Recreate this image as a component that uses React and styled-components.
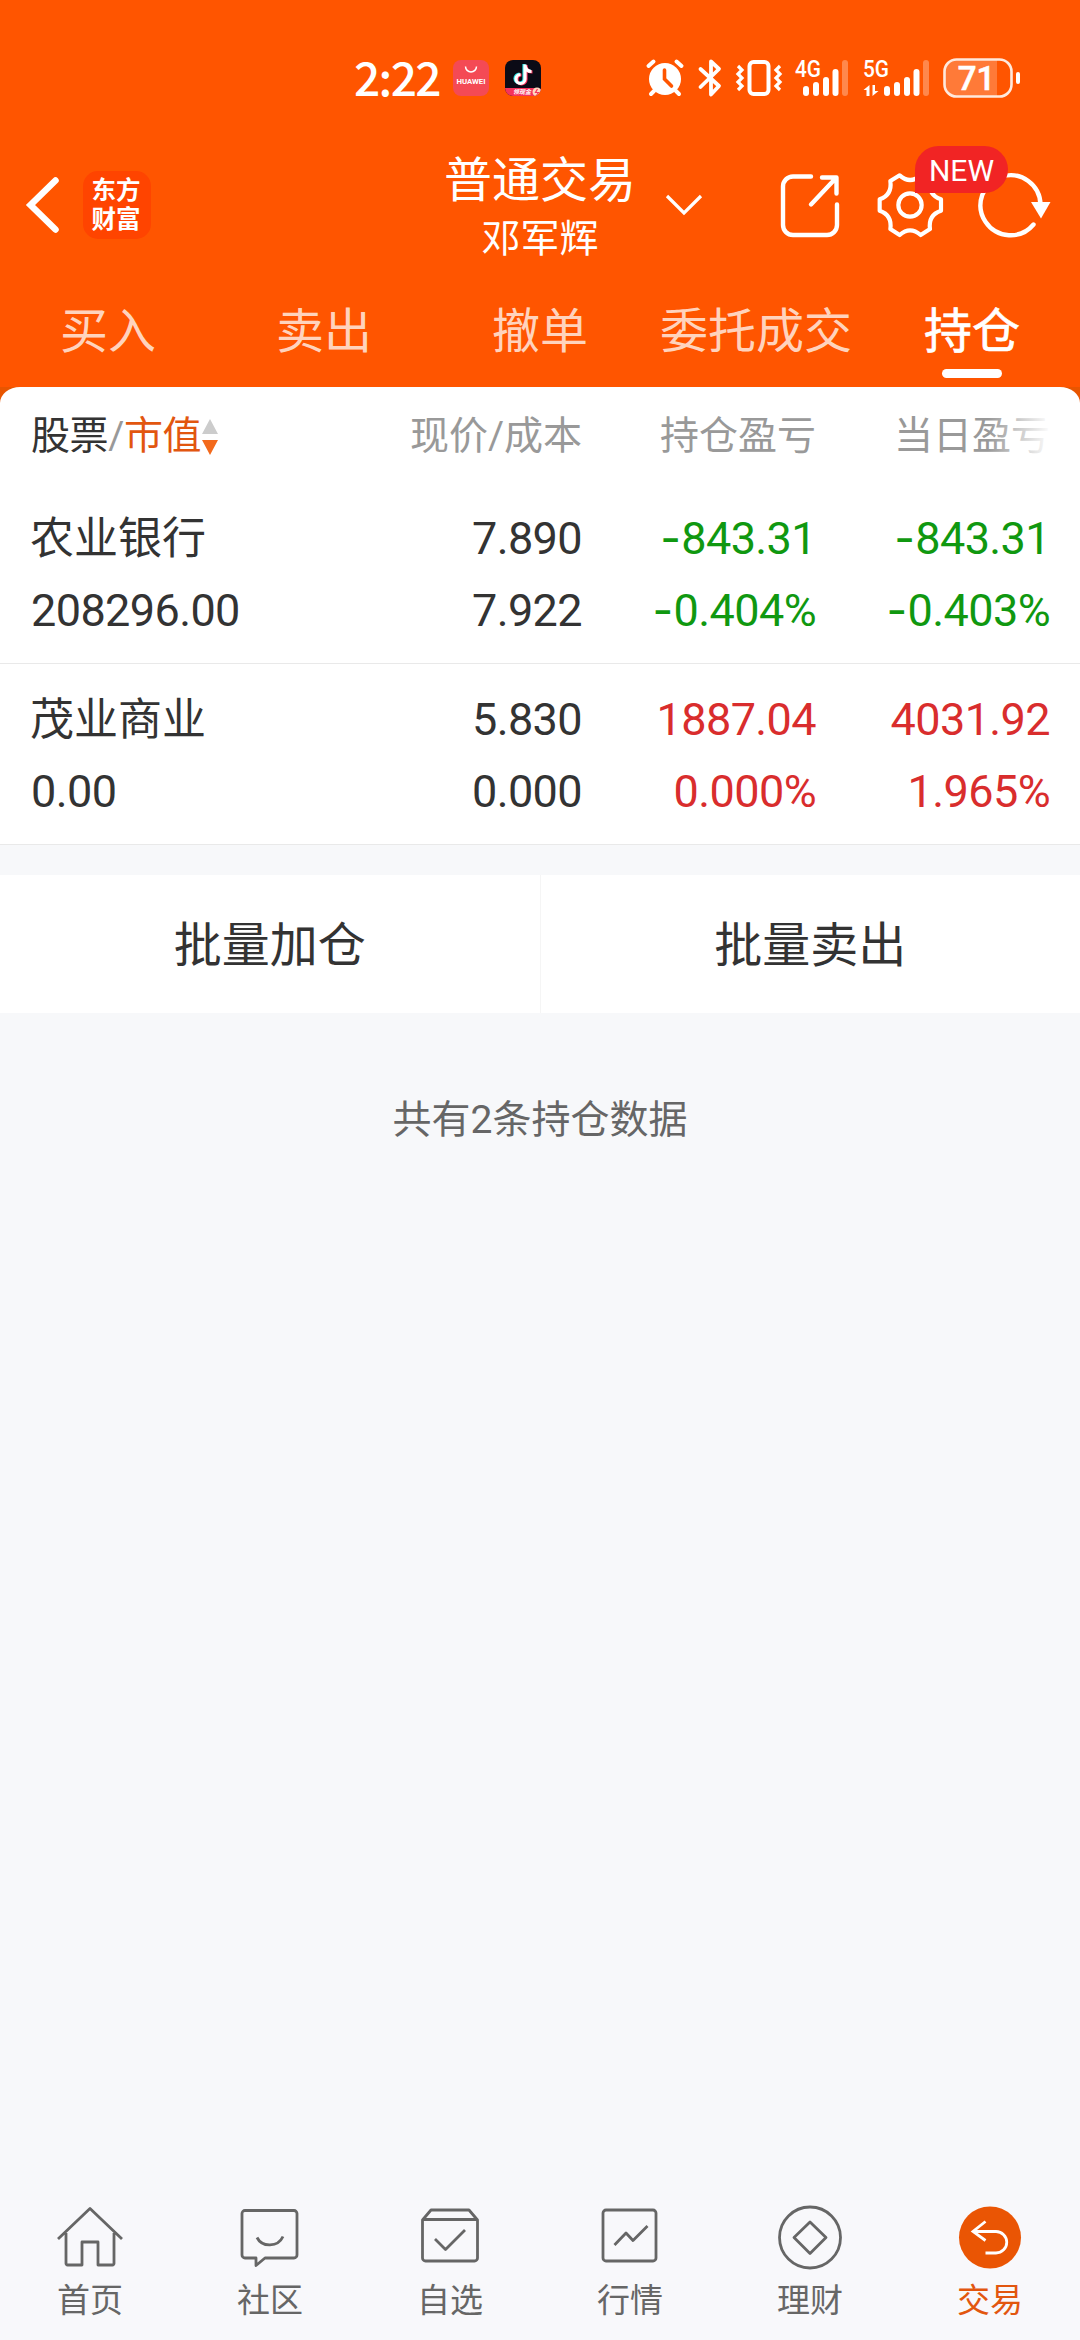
import styled, { createGlobalStyle } from 'styled-components'


const GlobalStyle = createGlobalStyle`
    *{
        box-sizing: border-box;
    }
    body{
        margin: 0;
        background: #f7f8fa;
        font-family: Roboto, "Noto Sans CJK SC", sans-serif;
        color: #333;
    }
    svg{
        display: block;
        flex: none;
        overflow: visible;
    }
`

const Page = styled.main`
    width: 1080px;
    height: 2340px;
    display: flex;
    flex-direction: column;
    overflow: hidden;
`

const HeaderStyle = styled.header`
    height: 387px;
    background: #ff5500;
    color: #fff;
    display: flex;
    flex-direction: column;
`

const StatusBar = styled.div`
    height: 138px;
    padding: 18px 59px 0 354px;
    display: flex;
    align-items: center;
    .time{
        width: 99px;
        margin-top: -5px;
        font-family: "Noto Sans CJK SC", sans-serif;
        font-size: 46px;
        font-weight: 500;
        line-height: 50px;
        letter-spacing: -1.6px;
        white-space: nowrap;
    }
    .apps{
        display: flex;
        gap: 16px;
        margin-right: auto;
    }
    .system{
        display: flex;
        align-items: center;
    }
    .system > * + *{
        margin-left: 13px;
    }
`

const TopBar = styled.div`
    height: 134px;
    display: grid;
    grid-template-columns: 360px 1fr 360px;
`

const Left = styled.div`
    display: flex;
    align-items: center;
    padding-left: 24px;
    gap: 23px;
`

const Logo = styled.div`
    width: 68px;
    height: 68px;
    border-radius: 15px;
    background: #ff4400;
    display: flex;
    flex-direction: column;
    align-items: center;
    justify-content: center;
    font-size: 24.5px;
    font-weight: 700;
    line-height: 29px;
    padding-right: 2px;
`

const Title = styled.div`
    display: flex;
    flex-direction: column;
    align-items: center;
    position: relative;
    h1{
        margin: 15px 0 0;
        font-size: 48px;
        font-weight: 400;
        line-height: 56px;
    }
    p{
        margin: 7px 0 0;
        font-size: 39px;
        line-height: 46px;
    }
    svg{
        position: absolute;
        left: 304px;
        top: 55px;
    }
`

const Actions = styled.div`
    display: flex;
    align-items: center;
    padding-left: 58px;
    position: relative;
    gap: 34px;
`

const Badge = styled.span`
    position: absolute;
    left: 195px;
    top: 8px;
    width: 93px;
    height: 47px;
    border-radius: 24px 24px 24px 0;
    background: #f12424;
    font-size: 30px;
    line-height: 49px;
    text-align: center;
`

const Tabs = styled.nav`
    flex: 1;
    display: grid;
    grid-template-columns: repeat(5, 1fr);
`

const Tab = styled.a`
    display: flex;
    flex-direction: column;
    align-items: center;
    padding-top: 32px;
    font-size: 48px;
    line-height: 56px;
    color: ${({ $active }) => ($active ? '#fff' : '#ffd3bd')};
    -webkit-text-stroke: ${({ $active }) => ($active ? '0.7px' : '0')};
    &::after{
        content: "";
        width: 60px;
        height: 9px;
        margin-top: 9px;
        border-radius: 5px;
        background: ${({ $active }) => ($active ? '#fff' : 'transparent')};
    }
`

const Panel = styled.section`
    background: linear-gradient(#e85500 20px, #fff 20px);
`

const Card = styled.div`
    background: #fff;
    border-radius: 20px 20px 0 0 / 16px 16px 0 0;
`

const Line = styled.div`
    display: grid;
    grid-template-columns: 300px 251px 234px 234px;
    padding-left: 31px;
    text-align: right;
    > :first-child{
        text-align: left;
    }
`

const TableHead = styled(Line)`
    height: 114px;
    padding-top: 21px;
    font-size: 39px;
    line-height: 56px;
    color: #999;
    position: relative;
    &::after{
        content: "";
        position: absolute;
        right: 0;
        top: 20px;
        width: 92px;
        height: 58px;
        background: linear-gradient(90deg, rgba(255, 255, 255, 0), rgba(255, 255, 255, 0.95) 60px);
    }
`

const SortCell = styled.span`
    display: flex;
    align-items: center;
    height: 56px;
    letter-spacing: -0.4px;
    .name{
        color: #333;
    }
    .sorted{
        color: #e2560f;
    }
    svg{
        margin: 2px 0 0 1px;
    }
`

const Holding = styled.article`
    height: ${({ $h }) => $h}px;
    padding-top: ${({ $top }) => $top}px;
    border-bottom: 1px solid #e9e9e9;
`

const Row = styled(Line)`
    font-size: 45px;
    line-height: 72px;
    letter-spacing: -0.6px;
    .stock{
        font-size: 44px;
        margin-left: -1px;
        letter-spacing: 0;
    }
`

const tones = { up: '#d92d2d', down: '#109810', flat: '#333' }

const Value = styled.span`
    color: ${({ $tone }) => tones[$tone]};
    .minus{
        font-family: Inter, sans-serif;
        line-height: 1;
        margin-right: 1px;
    }
`

const BatchBar = styled.div`
    margin-top: 30px;
    height: 138px;
    display: flex;
    background: #fff;
`

const BatchButton = styled.button`
    flex: 1;
    border: 0;
    padding: 0 0 7px;
    background: none;
    font: inherit;
    font-size: 48px;
    color: #333;
    & + &{
        border-left: 1px solid #f5f5f5;
    }
`

const Summary = styled.p`
    margin: 78px 0 0;
    text-align: center;
    font-size: 39px;
    line-height: 58px;
    color: #666;
`

const BottomNav = styled.nav`
    margin-top: auto;
    height: 140px;
    display: grid;
    grid-template-columns: repeat(6, 1fr);
    background: #f8f8fb;
`

const NavItem = styled.a`
    display: flex;
    flex-direction: column;
    align-items: center;
    font-size: 33px;
    line-height: 40px;
    color: ${({ $active }) => ($active ? '#e2560f' : '#666')};
    svg{
        margin: 3px 0 10px;
    }
`

const signalBars = [[0, 10], [10, 14], [20, 19], [29.5, 27]]

function Signal({ label, data }){
    const start = data ? 21 : 8
    return(
        <svg width={data ? 67 : 55} height="40" viewBox={`0 0 ${data ? 67 : 55} 40`} fill="#fff">
            <text x="0" y="19" fontSize="24" fontWeight="500" textLength="26" lengthAdjust="spacingAndGlyphs">{label}</text>
            {signalBars.map(([x, h]) => (
                <rect key={x} x={start + x} y={38 - h} width="6" height={h} rx="3" />
            ))}
            <rect x={start + 39} y="2" width="6" height="36" rx="3" opacity="0.3" />
            {data && <path d="M6.500 27v11H3.500v-6H.5zM9.500 38V27h2.500v6h3.500z" />}
        </svg>
    )
}

function SystemIcons(){
    return(
        <div className="system">
            <svg width="38" height="38" viewBox="0 0 38 38">
                <circle cx="19" cy="20" r="16" fill="#fff" />
                <path d="M2.500 7l5-4.500M35.500 7l-5-4.500M8 32l-3 3M30 32l3 3" stroke="#fff" strokeWidth="4" strokeLinecap="round" />
                <path d="M18.500 11v9l7 7" fill="none" stroke="#ff5500" strokeWidth="3.600" strokeLinecap="round" />
            </svg>
            <svg width="25" height="38" viewBox="-1 0 25 38" fill="none" stroke="#fff" strokeWidth="3.8" strokeLinejoin="round" strokeLinecap="round">
                <path d="M2.500 10L21 27l-8 8.500V2.500L21 10 2.500 28" />
            </svg>
            <svg width="47" height="38" viewBox="-1 0 47 38" fill="none" stroke="#fff" strokeWidth="4">
                <rect x="13.500" y="3" width="19" height="32" rx="4" />
                <path d="M2 7l4 4-4 4 4 4-4 4 4 4-4 4M44 7l-4 4 4 4-4 4 4 4-4 4 4 4" strokeWidth="3.200" />
            </svg>
            <Signal label="4G" />
            <Signal label="5G" data />
            <svg width="78" height="40" viewBox="0 0 78 40">
                <path d="M13 2h41v36H13A11 11 0 0 1 2 27V13A11 11 0 0 1 13 2z" fill="#ff7a38" />
                <rect x="1.500" y="1.500" width="67" height="37" rx="12" fill="none" stroke="#ffe9dc" strokeWidth="2.600" />
                <rect x="73" y="14" width="4" height="12" rx="2" fill="#fff" />
                <text x="33.500" y="32" fontSize="33" fontWeight="500" textAnchor="middle" fill="#fff" stroke="#fff" strokeWidth="0.6">71</text>
            </svg>
        </div>
    )
}

function AppIcons(){
    return(
        <div className="apps">
            <svg width="36" height="36" viewBox="0 0 36 36">
                <rect width="36" height="36" rx="8" fill="#f44a55" />
                <path d="M12.500 6.500a5.500 5.500 0 0 0 11 0" fill="none" stroke="#fff" strokeWidth="1.500" />
                <text x="18" y="23.500" fontSize="7.500" fontWeight="700" textAnchor="middle" textLength="29" lengthAdjust="spacingAndGlyphs" fill="#fff">HUAWEI</text>
            </svg>
            <svg width="36" height="36" viewBox="0 0 36 36">
                <defs>
                    <clipPath id="app"><rect width="36" height="36" rx="8" /></clipPath>
                </defs>
                <g clipPath="url(#app)">
                    <rect width="36" height="36" fill="#0b0b16" />
                    <g fill="none" strokeWidth="3.200">
                        <path d="M19 4v14.500a4.500 4.500 0 1 1-4.500-4.500M19 5c.5 4 3 6 6.500 6" stroke="#27e4e4" />
                        <path d="M21 5v14.500a4.500 4.500 0 1 1-4.500-4.500M21 6c.5 4 3 6 6.500 6" stroke="#f9325c" />
                        <path d="M20 4.500V19a4.500 4.500 0 1 1-4.500-4.500M20 5.500c.5 4 3 6 6.500 6" stroke="#fff" />
                    </g>
                    <path d="M0 28h30l6 1v7H0z" fill="#f5335c" />
                    <text x="8" y="34" fontSize="6" fontWeight="700" fontStyle="italic" fill="#fff">领现金</text>
                    <circle cx="32" cy="32" r="4.500" fill="#ffd9c0" />
                    <path d="M32.500 29l-2 3.500h3l-2 3" fill="none" stroke="#f5335c" strokeWidth="1.200" />
                </g>
            </svg>
        </div>
    )
}

function Header(){
    const tabs = ['买入', '卖出', '撤单', '委托成交', '持仓']
    return(
        <HeaderStyle>
            <StatusBar>
                <span className="time">2:22</span>
                <AppIcons />
                <SystemIcons />
            </StatusBar>
            <TopBar>
                <Left>
                    <svg width="36" height="60" viewBox="0 0 36 60" fill="none" stroke="#fff" strokeWidth="6.500" strokeLinecap="round">
                        <path d="M31.500 5.500L6.500 30l25 24.500" />
                    </svg>
                    <Logo>
                        <span>东方</span>
                        <span>财富</span>
                    </Logo>
                </Left>
                <Title>
                    <h1>普通交易</h1>
                    <p>邓军辉</p>
                    <svg width="40" height="24" viewBox="0 0 40 24" fill="none" stroke="#fff" strokeWidth="3.200">
                        <path d="M3 3l17 17L37 3" />
                    </svg>
                </Title>
                <Actions>
                    <svg width="64" height="68" viewBox="0 0 64 68" fill="none" stroke="#fff" strokeWidth="4.400" strokeLinecap="round" strokeLinejoin="round">
                        <path d="M33 5.500H15A10 10 0 0 0 5 15.500V54a10 10 0 0 0 10 10h34a10 10 0 0 0 10-10V33.500M44 6.500h14.500v16M57.500 7.500L33 33.500" />
                    </svg>
                    <svg width="68" height="68" viewBox="469 122 204 204" fill="none" stroke="#fff" strokeWidth="12.500" strokeLinejoin="round">
                        <path d="M540 135Q571 163 603 135L631 152Q625 194 664 207V241Q625 254 631 296L603 314Q571 286 540 314L512 296Q518 254 480 241V207Q518 194 512 152Z" />
                        <circle cx="571" cy="224" r="35" />
                    </svg>
                    <svg width="72" height="68" viewBox="-1 0 72 68">
                        <path d="M54.500 53.500A30 30 0 1 1 61.500 34" fill="none" stroke="#fff" strokeWidth="4.400" strokeLinecap="round" />
                        <path d="M52 31h19.500L62 47.500z" fill="#fff" />
                    </svg>
                    <Badge>NEW</Badge>
                </Actions>
            </TopBar>
            <Tabs>
                {tabs.map((tab) => (
                    <Tab key={tab} $active={tab === '持仓'}>{tab}</Tab>
                ))}
            </Tabs>
        </HeaderStyle>
    )
}

const holdings = [
    {
        h: 163,
        padTop: 2,
        top: ['农业银行', '7.890', '-843.31', '-843.31'],
        bottom: ['208296.00', '7.922', '-0.404%', '-0.403%'],
        tone: 'down',
    },
    {
        h: 181,
        padTop: 20,
        top: ['茂业商业', '5.830', '1887.04', '4031.92'],
        bottom: ['0.00', '0.000', '0.000%', '1.965%'],
        tone: 'up',
    },
]

function Amount({ text, tone }){
    const negative = text.startsWith('-')
    return(
        <Value $tone={tone}>
            {negative && <span className="minus">-</span>}
            {negative ? text.slice(1) : text}
        </Value>
    )
}

function HoldingItem({ item }){
    return(
        <Holding $h={item.h} $top={item.padTop}>
            <Row>
                <span className="stock">{item.top[0]}</span>
                <Amount text={item.top[1]} tone="flat" />
                <Amount text={item.top[2]} tone={item.tone} />
                <Amount text={item.top[3]} tone={item.tone} />
            </Row>
            <Row>
                <Amount text={item.bottom[0]} tone="flat" />
                <Amount text={item.bottom[1]} tone="flat" />
                <Amount text={item.bottom[2]} tone={item.tone} />
                <Amount text={item.bottom[3]} tone={item.tone} />
            </Row>
        </Holding>
    )
}

const menu = [
    {
        label: '首页',
        icon: <path d="M2 36L34 5.500 66 36M10 30v30.500a1.500 1.500 0 0 0 1.500 1.500H26V39h16v23h14.500a1.500 1.500 0 0 0 1.500-1.500V30" />,
    },
    {
        label: '社区',
        icon: <path d="M9 7.500h49a3 3 0 0 1 3 3V52a3 3 0 0 1-3 3H29l-9 7.500V55H9a3 3 0 0 1-3-3V10.500a3 3 0 0 1 3-3zM21 34.500c5 10 21 10 26-1" />,
    },
    {
        label: '自选',
        icon: <path d="M6.500 17L15 7h38l8.500 10v38a3 3 0 0 1-3 3h-49a3 3 0 0 1-3-3zM6.500 16.500h55M19 36l10.500 10.500L49 27" />,
    },
    {
        label: '行情',
        icon: <path d="M10 7h47a3 3 0 0 1 3 3v45a3 3 0 0 1-3 3H10a3 3 0 0 1-3-3V10a3 3 0 0 1 3-3zM18.500 42L30 30l7 7.500L51.500 23" />,
    },
    {
        label: '理财',
        icon: <path d="M34 4a30.500 30.500 0 1 1 0 61 30.500 30.500 0 0 1 0-61zM34 19l16 15.500-16 16-16-16z" />,
    },
    {
        label: '交易',
        active: true,
        icon: (
            <>
                <circle cx="34" cy="34.500" r="31" fill="#ea5504" stroke="none" />
                <path d="M17 28.500h23a10.500 10.500 0 0 1 0 21.500H29.500M29.500 18.500L17 28.500l12.500 9" stroke="#fff" strokeLinejoin="miter" />
            </>
        ),
    },
]

export default function App(){
    return(
        <>
        <GlobalStyle />
        <Page>
            <Header />
            <Panel>
                <Card>
                    <TableHead>
                        <SortCell>
                            <span className="name">股票</span>
                            <span>/</span>
                            <span className="sorted">市值</span>
                            <svg width="16" height="36" viewBox="0 0 16 36">
                                <path d="M8 0l8 15H0z" fill="#ccc" />
                                <path d="M8 36l8-15H0z" fill="#f36a1c" />
                            </svg>
                        </SortCell>
                        <span>现价/成本</span>
                        <span>持仓盈亏</span>
                        <span>当日盈亏</span>
                    </TableHead>
                    {holdings.map((item) => (
                        <HoldingItem key={item.top[0]} item={item} />
                    ))}
                </Card>
            </Panel>
            <BatchBar>
                <BatchButton>批量加仓</BatchButton>
                <BatchButton>批量卖出</BatchButton>
            </BatchBar>
            <Summary>共有2条持仓数据</Summary>
            <BottomNav>
                {menu.map((item) => (
                    <NavItem key={item.label} $active={item.active}>
                        <svg width="68" height="68" viewBox="0 0 68 68" fill="none" stroke="#666" strokeWidth="2.800" strokeLinejoin="round">
                            {item.icon}
                        </svg>
                        {item.label}
                    </NavItem>
                ))}
            </BottomNav>
        </Page>
        </>
    )
}
